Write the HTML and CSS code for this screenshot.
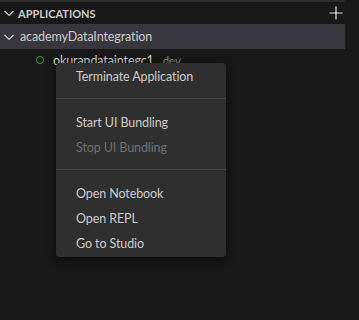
FILE: index.html
```html
<!DOCTYPE html>
<html>
<head>
    <title>Applications</title>
    <link rel="stylesheet" href="styles.css">
</head>
<body>
    <div class="pane">
        <div class="pane-header">
            <svg class="chevron" width="16" height="16" viewBox="0 0 16 16"><path d="M3.5 6l4.5 4.5L12.5 6" fill="none" stroke="#cccccc" stroke-width="1.2"/></svg>
            <span class="pane-title">APPLICATIONS</span>
            <svg class="plus" width="16" height="16" viewBox="0 0 16 16"><path d="M8 1.5v13M1.5 8h13" stroke="#e6e6e6" stroke-width="1.2"/></svg>
        </div>
        <div class="row selected">
            <svg class="chevron" width="16" height="16" viewBox="0 0 16 16"><path d="M3.5 6l4.5 4.5L12.5 6" fill="none" stroke="#cccccc" stroke-width="1.2"/></svg>
            <span class="label">academyDataIntegration</span>
        </div>
        <div class="row child">
            <span class="status"></span>
            <span class="label">okurandataintegc1</span>
            <span class="desc">dev</span>
        </div>
    </div>

    <div class="menu">
        <div class="item">Terminate Application</div>
        <div class="sep"></div>
        <div class="item">Start UI Bundling</div>
        <div class="item disabled">Stop UI Bundling</div>
        <div class="sep"></div>
        <div class="item">Open Notebook</div>
        <div class="item">Open REPL</div>
        <div class="item">Go to Studio</div>
    </div>
</body>
</html>
```

FILE: styles.css
```css
body {
    margin: 0;
    background-color: #181818;
    font-family: Lato, "Noto Sans", sans-serif;
    color: #cccccc;
    width: 359px;
    height: 320px;
    overflow: hidden;
    position: relative;
}

.pane {
    border-top: 2px solid #2b2b2b;
    width: 345px;
}

.pane-header {
    display: flex;
    align-items: center;
    height: 22px;
}

.pane-header .chevron {
    margin-left: 1px;
    margin-right: 1px;
}

.pane-title {
    font-size: 11px;
    font-weight: bold;
    color: #cccccc;
    flex: 1;
}

.plus {
    margin-right: 1px;
}

.row {
    display: flex;
    align-items: center;
    height: 25px;
    font-size: 12.5px;
    letter-spacing: -0.1px;
}

.selected {
    background-color: #37373d;
}

.selected .chevron {
    margin-left: 1px;
    margin-right: 3px;
}

.child {
    height: 22px;
    padding-left: 36px;
}

.status {
    width: 6px;
    height: 6px;
    border: 1px solid #2ea043;
    border-radius: 50%;
    margin-right: 9px;
}

.desc {
    font-size: 11.5px;
    color: #8b8b8b;
    margin-left: 9px;
}

.menu {
    position: absolute;
    left: 56px;
    top: 63px;
    width: 170px;
    padding: 1px 0 1px 0;
    background-color: #2f2f2f;
    border-radius: 4px;
    box-shadow: 0 2px 8px rgba(0, 0, 0, 0.6);
    font-size: 12.5px;
    letter-spacing: -0.1px;
}

.item {
    height: 25px;
    line-height: 25px;
    padding-left: 20px;
    color: #cccccc;
}

.item.disabled {
    color: #6e6e6e;
}

.sep {
    height: 1px;
    background-color: #454545;
    margin: 9px 0 11px 0;
}
```
